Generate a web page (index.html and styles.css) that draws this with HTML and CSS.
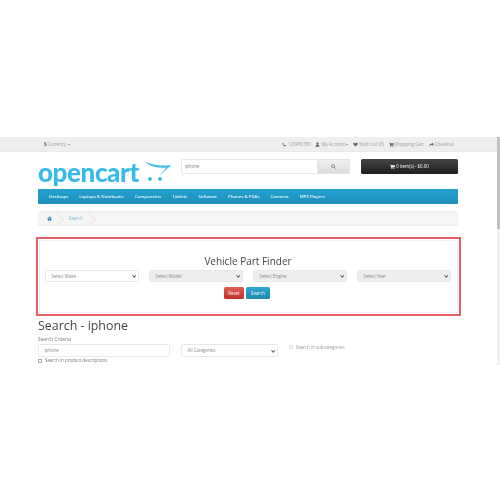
FILE: index.html
```html
<!DOCTYPE html>
<html lang="en">
<head>
<meta charset="utf-8">
<title>Search - iphone</title>
<link rel="stylesheet" href="styles.css">
</head>
<body>
<div class="shot">
  <div class="page">
    <div class="topbar">
      <div class="currency"><b class="cur-sign">$</b> Currency <i class="caret"></i></div>
      <ul class="toplinks">
        <li><svg class="ic" viewBox="0 0 10 10"><path d="M2 1l1.500 2-1 1c.5 1.300 1.300 2.100 2.500 2.500l1-1 2 1.500c-.5 1.500-1.500 2-2.500 1.500C3.500 7.800 1.800 6 1 3.500.8 2.500 1 1.500 2 1z"/></svg>123456789</li>
        <li><svg class="ic" viewBox="0 0 10 10"><circle cx="5" cy="3" r="2.300"/><path d="M1 9.500c0-3 1.500-4 4-4s4 1 4 4z"/></svg>My Account <i class="caret"></i></li>
        <li><svg class="ic" viewBox="0 0 10 10"><path d="M5 9L1 5C0 3.500.5 1.500 2.500 1.500 3.700 1.500 4.500 2.200 5 3c.5-.8 1.300-1.500 2.500-1.500C9.500 1.500 10 3.500 9 5z"/></svg>Wish List (0)</li>
        <li><svg class="ic" viewBox="0 0 10 10"><path d="M0 1.500h2l.4 1H10L9 6.500H3.200l.2 1H9v1H2.600L1.300 2.500H0z"/><circle cx="3.500" cy="9" r=".9"/><circle cx="8" cy="9" r=".9"/></svg>Shopping Cart</li>
        <li><svg class="ic" viewBox="0 0 10 10"><path d="M6 1l4 3.500L6 8V6C3.500 6 2 6.500 .5 9 .8 5.500 2.500 3 6 3z"/></svg>Checkout</li>
      </ul>
    </div>
    <header class="head">
      <div class="logo">
        <span class="logo-text">opencart</span>
        <svg class="logo-cart" viewBox="0 0 30 24">
          <path class="logo-swoosh" d="M1 1C7 4.500 16 6.500 28.500 5 24 9 20 12 16 16 19 12.500 21 10 23.500 7.500 14 8.500 6 6 1 1z"/>
          <circle cx="7" cy="19" r="1.900"/><circle cx="17" cy="19" r="1.900"/>
        </svg>
      </div>
      <div class="searchbox">
        <div class="searchinput">iphone</div>
        <div class="searchbtn"><svg class="mag" viewBox="0 0 10 10"><circle cx="4.200" cy="4.200" r="3"/><path d="M6.500 6.500L9.300 9.300"/></svg></div>
      </div>
      <div class="cartbtn"><svg class="ic ic-white" viewBox="0 0 10 10"><path d="M0 1.500h2l.4 1H10L9 6.500H3.200l.2 1H9v1H2.600L1.300 2.500H0z"/><circle cx="3.500" cy="9" r=".9"/><circle cx="8" cy="9" r=".9"/></svg>0 item(s) - $0.00</div>
    </header>
    <nav class="menu">
      <span>Desktops</span><span>Laptops &amp; Notebooks</span><span>Components</span><span>Tablets</span><span>Software</span><span>Phones &amp; PDAs</span><span>Cameras</span><span>MP3 Players</span>
    </nav>
    <div class="crumbs">
      <svg class="home" viewBox="0 0 10 10"><path d="M5 1L0 5.500l.6.700L5 2.500l4.400 3.700.6-.7-2-1.700V1.500H7v1.100zM1.500 6.300V9.500h2.700V7h1.600v2.500h2.700V6.300L5 3.300z"/></svg>
      <span class="sep"></span>
      <span class="crumb-link">Search</span>
      <span class="sep"></span>
    </div>
    <section class="finder-outline">
      <div class="finder">
        <h3 class="finder-title">Vehicle Part Finder</h3>
        <div class="finder-selects">
          <div class="sel">Select Make<i class="chev"></i></div>
          <div class="sel sel-off">Select Model<i class="chev"></i></div>
          <div class="sel sel-off">Select Engine<i class="chev"></i></div>
          <div class="sel sel-off">Select Year<i class="chev"></i></div>
        </div>
        <div class="finder-btns">
          <span class="btn btn-red">Reset</span>
          <span class="btn btn-blue">Search</span>
        </div>
      </div>
    </section>
    <main class="content">
      <h1 class="title">Search - iphone</h1>
      <div class="label">Search Criteria</div>
      <div class="criteria">
        <div class="sel field-q">iphone</div>
        <div class="sel field-cat">All Categories<i class="chev"></i></div>
        <div class="subcat"><i class="check check-off"></i>Search in subcategories</div>
      </div>
      <div class="desc"><i class="check"></i>Search in product descriptions</div>
    </main>
  </div>
  <div class="scrollbar"><div class="thumb"></div></div>
</div>
</body>
</html>
```
FILE: styles.css
```css
* { box-sizing: border-box; }
html, body { margin: 0; padding: 0; background: #fff; }
body { width: 500px; height: 500px; overflow: hidden; font-family: "Open Sans", "Liberation Sans", sans-serif; color: #777; }
.shot { display: flex; margin-top: 137px; height: 228px; overflow: hidden; filter: blur(.4px); }
.page { width: 497px; flex: none; overflow: hidden; font-size: 4.400px; line-height: 7px; }
.scrollbar { width: 3px; flex: none; background: #f1f1f1; }
.thumb { height: 92px; background: #c1c1c1; }

.topbar { height: 15px; background: #eee; border-bottom: 1px solid #e9e9e9; padding: 0 43px 0 44px; display: flex; justify-content: space-between; align-items: center; color: #999; }
.currency { display: flex; align-items: center; gap: 1px; }
.cur-sign { color: #555; }
.caret { display: inline-block; width: 0; height: 0; border: 1.500px solid transparent; border-top-color: #555; border-bottom: 0; margin-left: 1px; }
.toplinks { list-style: none; margin: 0; padding: 0; display: flex; gap: 5px; }
.toplinks li { display: flex; align-items: center; }
.ic { width: 5px; height: 5px; fill: #666; margin-right: 1px; flex: none; }
.ic-white { fill: #fff; }

.head { display: flex; align-items: flex-start; margin: 7px 39px 0 38px; height: 30px; }
.logo { width: 143px; height: 30px; display: flex; flex: none; }
.logo-text { font-family: Lato, "Open Sans", sans-serif; font-weight: 900; font-size: 26px; line-height: 30px; letter-spacing: -.4px; color: #38b9ea; margin-top: -2px; width: 104px; flex: none; }
.logo-cart { width: 30px; height: 24px; margin: 1px 0 0 1px; fill: #38b9ea; flex: none; }
.searchbox { display: flex; width: 169px; height: 15px; flex: none; }
.searchinput { flex: 1; background: #fff; border: 1px solid #e8e8e8; border-radius: 1.500px 0 0 1.500px; padding-left: 3px; line-height: 13px; color: #777; }
.searchbtn { width: 32px; background: linear-gradient(#f0f0f0, #dcdcdc); border: 1px solid #e4e4e4; border-left: 0; border-radius: 0 1.500px 1.500px 0; display: flex; align-items: center; justify-content: center; }
.mag { width: 5px; height: 5px; fill: none; stroke: #555; stroke-width: 1.200; }
.cartbtn { width: 97px; height: 15px; margin-left: 11px; background: linear-gradient(#444, #1f1f1f); border-radius: 1.500px; color: #fff; display: flex; align-items: center; justify-content: center; flex: none; }

.menu { height: 15px; margin: 0 39px 0 38px; background: #229ac8; background-image: linear-gradient(#23a1d1, #1f90bb); border-bottom: 1px solid #1f90bb; border-radius: 1.500px; display: flex; align-items: center; padding-left: 11px; gap: 11px; color: #eef8fc; font-weight: 600; font-size: 4.300px; }

.crumbs { height: 15px; margin: 7px 39px 0 38px; background: #f5f5f5; border: 1px solid #eee; border-radius: 1.500px; display: flex; align-items: center; padding-left: 8px; overflow: hidden; }
.home { width: 5px; height: 5px; fill: #1f7fa6; flex: none; }
.sep { width: 10px; height: 10px; border-top: 1px solid #e8e8e8; border-right: 1px solid #e8e8e8; transform: rotate(45deg); margin: 0 4px 0 0; flex: none; }
.crumb-link { color: #6fb6d6; margin-right: 0; margin-left: 3px; width: 15px; flex: none; }

.finder-outline { height: 79px; margin: 11px 36px 0 36px; border: 2px solid #e45f64; padding: 1px; }
.finder { height: 100%; border: 1px solid #f0f0f0; border-radius: 1.500px; padding: 13px 6px 0 5px; text-align: center; }
.finder-title { margin: 0 0 1.500px; font-size: 10px; line-height: 14px; font-weight: 400; color: #444; }
.finder-selects { display: flex; gap: 10px; margin-top: 0; text-align: left; }
.sel { position: relative; height: 12.500px; border: 1px solid #e8e8e8; border-radius: 1.500px; background: #fff; padding-left: 5.500px; line-height: 10.500px; color: #888; }
.finder-selects .sel { flex: 1; }
.sel-off { background: #eee; }
.chev { position: absolute; right: 2.500px; top: 3.500px; width: 2.500px; height: 2.500px; border-right: 1px solid #555; border-bottom: 1px solid #555; transform: rotate(45deg); }
.finder-btns { display: flex; justify-content: center; gap: 2px; margin: 4.500px 2px 0 0; }
.btn { height: 12.500px; line-height: 12px; border-radius: 1.500px; color: #fff; text-align: center; }
.btn-red { width: 20px; background: linear-gradient(#e06055, #c12e2a); }
.btn-blue { width: 24px; background: linear-gradient(#2ba7d3, #1f86ad); }

.content { padding: 0 39px 0 38px; }
.title { margin: 1px 0 0; font-size: 12.400px; line-height: 17px; font-weight: 400; color: #444; }
.label { margin-top: 2px; height: 7px; color: #777; font-size: 4.800px; }
.criteria { display: flex; margin-top: 1px; align-items: flex-start; }
.field-q { width: 132px; }
.field-cat { width: 97px; margin-left: 11px; }
.subcat { display: flex; align-items: center; margin: 0 0 0 11px; height: 6px; gap: 3px; color: #999; }
.check { width: 4px; height: 4px; border: 1px solid #aaa; background: #fff; flex: none; }
.check-off { border-color: #e4e4e4; background: #f5f5f5; }
.desc { display: flex; align-items: center; gap: 3px; margin-top: 1px; height: 6px; }
```
